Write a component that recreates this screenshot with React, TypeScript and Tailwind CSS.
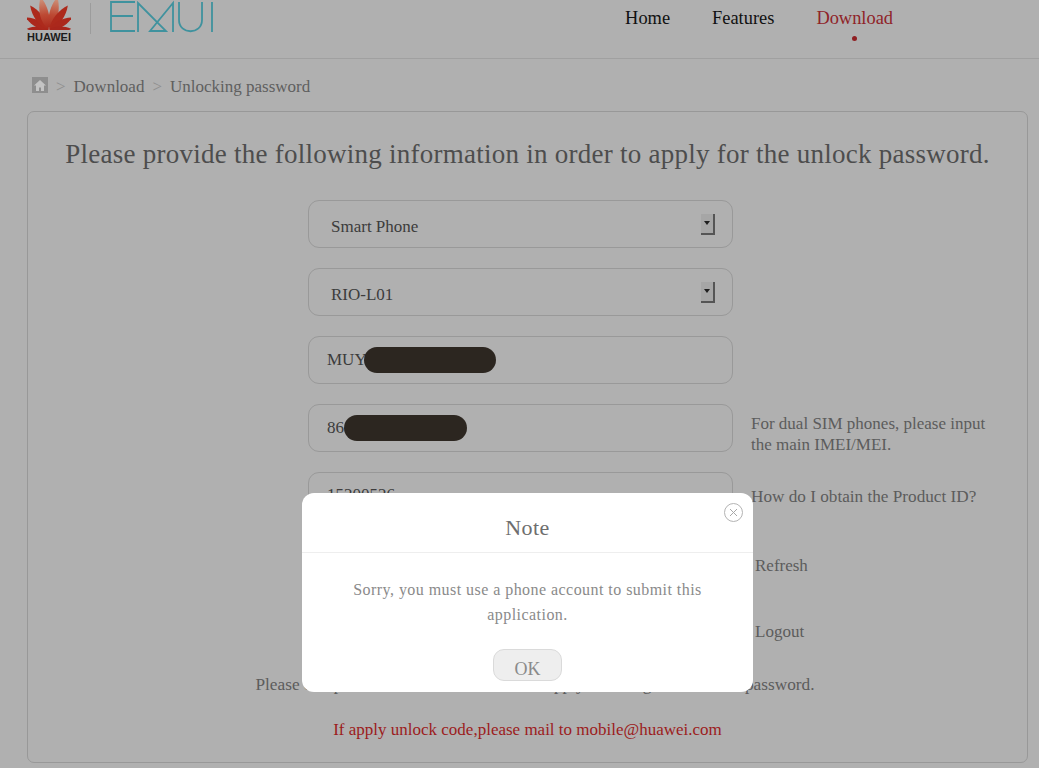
const serif = "font-['Liberation_Serif',serif]";

const petals = [
  { angle: -84, scale: 0.74, fill: "#a8261c" },
  { angle: -58, scale: 0.86, fill: "#ab281c" },
  { angle: -33, scale: 1, fill: "#ad2a1c" },
  { angle: -9, scale: 1.1, fill: "url(#petal)" },
  { angle: 9, scale: 1.1, fill: "url(#petal)" },
  { angle: 33, scale: 1, fill: "#ad2a1c" },
  { angle: 58, scale: 0.86, fill: "#ab281c" },
  { angle: 84, scale: 0.74, fill: "#a8261c" },
];

function HuaweiLogo() {
  return (
    <div className="flex w-[44px] flex-col items-center">
      <svg width="44" height="30" viewBox="0 0 44 30">
        <defs>
          <linearGradient id="petal" x1="0" y1="0" x2="0" y2="1">
            <stop offset="0" stopColor="#cf9c84" />
            <stop offset="0.55" stopColor="#bd4a34" />
            <stop offset="1" stopColor="#a8261a" />
          </linearGradient>
        </defs>
        {petals.map((p) => (
          <path
            key={p.angle}
            d={p.angle < 0 ? "M21.5 29 C14 21 15 8 19 -1 C24 7 26 20 21.5 29 Z" : "M22.5 29 C18 20 20 7 25 -1 C29 8 30 21 22.5 29 Z"}
            fill={p.fill}
            transform={`rotate(${p.angle} 22 29) translate(22 29) scale(${p.scale}) translate(-22 -29)`}
          />
        ))}
      </svg>
      <span className="mt-[3px] font-['Liberation_Sans',sans-serif] text-[11px] leading-[8px] font-bold text-[#1c1c1c]">
        HUAWEI
      </span>
    </div>
  );
}

function EmuiLogo() {
  return (
    <svg width="104" height="34" viewBox="0 0 104 34" fill="none" stroke="#3f929e" strokeWidth="1.8">
      <path d="M25 2H1V31H25M1 16H23" />
      <path d="M28 32V3L56 31H40L63 3V32" />
      <path d="M69 2V20C69 35 92 35 92 20V2" />
      <path d="M102 2V32" />
    </svg>
  );
}

function SelectArrow() {
  return (
    <div className="flex h-[21px] w-[14px] items-center justify-center border-r-2 border-b-2 border-[#555555] bg-[#a6a6a6]">
      <svg width="6" height="4" viewBox="0 0 6 4">
        <path d="M0 0H6L3 4Z" fill="#1f1f1f" />
      </svg>
    </div>
  );
}

function Box({ children, className = "" }: { children?: React.ReactNode; className?: string }) {
  return (
    <div className={`flex h-[48px] w-[425px] shrink-0 items-center rounded-[11px] border border-[#999999] text-[17px] text-[#3c3c3c] ${className}`}>
      {children}
    </div>
  );
}

function Blob({ width }: { width: string }) {
  return <span className={`h-[26px] rounded-full bg-[#2c2620] ${width}`} />;
}

export default function App() {
  return (
    <div className={`relative h-[768px] w-[1039px] overflow-hidden bg-[#b0b0b0] ${serif}`}>
      <header className="flex h-[59px] justify-between border-b border-[#a0a0a0] pr-[146px] pl-[27px]">
        <div className="flex items-start">
          <HuaweiLogo />
          <div className="mt-[3px] ml-[19px] h-[31px] w-px bg-[#9c9c9c]" />
          <div className="ml-[19px]">
            <EmuiLogo />
          </div>
        </div>
        <nav className="flex gap-[42px] pt-[7px] text-[18.4px] leading-[22px] text-[#111111]">
          <span>Home</span>
          <span>Features</span>
          <div className="relative text-[#8f2328]">
            Download
            <span className="absolute top-[29px] left-[36px] size-[5px] rounded-full bg-[#8f1f22]" />
          </div>
        </nav>
      </header>

      <div className="flex h-[52px] items-center pt-[3px] pl-[32px] text-[17px] text-[#5f5f5f]">
        <div className="-mt-[3px] flex size-[16px] items-center justify-center bg-[#8e8e8e]">
          <svg width="12" height="11" viewBox="0 0 12 11">
            <path d="M6 0L12 5.5H10V11H7V7.5H5V11H2V5.5H0Z" fill="#c4c4c4" />
          </svg>
        </div>
        <span className="mr-[8px] ml-[8px] text-[#8e8e8e]">&gt;</span>
        <span>Download</span>
        <span className="mx-[8px] text-[#8e8e8e]">&gt;</span>
        <span>Unlocking password</span>
      </div>

      <main className="ml-[27px] h-[652px] w-[1001px] rounded-[7px] border border-[#989898] pt-[26px]">
        <h1 className="text-center text-[27px] leading-[32px] tracking-[0.25px] text-[#4d4d4d]">
          Please provide the following information in order to apply for the unlock password.
        </h1>

        <div className="mt-[30px] flex flex-col gap-[20px] pl-[280px] text-[17px] text-[#5c5c5c]">
          <Box className="justify-between pr-[17px] pl-[22px]">
            <span className="pt-[6px]">Smart Phone</span>
            <SelectArrow />
          </Box>
          <Box className="justify-between pr-[17px] pl-[22px]">
            <span className="pt-[6px]">RIO-L01</span>
            <SelectArrow />
          </Box>
          <Box className="pl-[18px]">
            MUY
            <span className="-ml-[3px] flex">
              <Blob width="w-[132px]" />
            </span>
          </Box>
          <div className="flex items-start gap-[18px]">
            <Box className="pl-[18px]">
              86
              <span className="flex">
                <Blob width="w-[123px]" />
              </span>
            </Box>
            <p className="h-[48px] pt-[9px] leading-[21px]">
              For dual SIM phones, please input
              <br />
              the main IMEI/MEI.
            </p>
          </div>
          <div className="flex items-start gap-[18px]">
            <Box className="items-start pt-[9px] pl-[18px]">15200526</Box>
            <p className="pt-[15px] text-[17.2px] leading-[20px]">How do I obtain the Product ID?</p>
          </div>
          <div className="flex items-center gap-[22px]">
            <Box />
            <span className="pt-[3px]">Refresh</span>
          </div>
          <div className="flex items-center gap-[22px]">
            <Box />
            <span>Logout</span>
          </div>
        </div>

        <p className="mt-[18px] pl-[15px] text-center text-[17.3px] leading-[22px] text-[#5c5c5c]">
          Please complete the information above to apply for and get the unlock password.
        </p>
        <p className="mt-[23px] text-center text-[17px] leading-[22px] text-[#9c1c20]">
          If apply unlock code,please mail to mobile@huawei.com
        </p>
      </main>

      <div className="absolute top-[493px] left-[302px] h-[199px] w-[451px] rounded-[12px] bg-white text-center">
        <div className="h-[60px] border-b border-[#eeeeee] pt-[21px] text-[22px] leading-[28px] tracking-[0.4px] text-[#6e6e6e]">
          Note
        </div>
        <button className="absolute top-[10px] right-[10px] flex size-[19px] items-center justify-center rounded-full border border-[#b4b4b4]">
          <svg width="9" height="9" viewBox="0 0 9 9" stroke="#a8a8a8" fill="none">
            <path d="M1 1L8 8M8 1L1 8" />
          </svg>
        </button>
        <p className="mx-auto mt-[24px] w-[370px] text-[16px] leading-[25px] tracking-[0.45px] text-[#8a8a8a]">
          Sorry, you must use a phone account to submit this application.
        </p>
        <button className="mt-[22px] h-[32px] w-[69px] rounded-[11px] border border-[#dadada] bg-[#eeeeee] pt-[6px] text-[18px] text-[#8a8a8a]">
          OK
        </button>
      </div>
    </div>
  );
}
